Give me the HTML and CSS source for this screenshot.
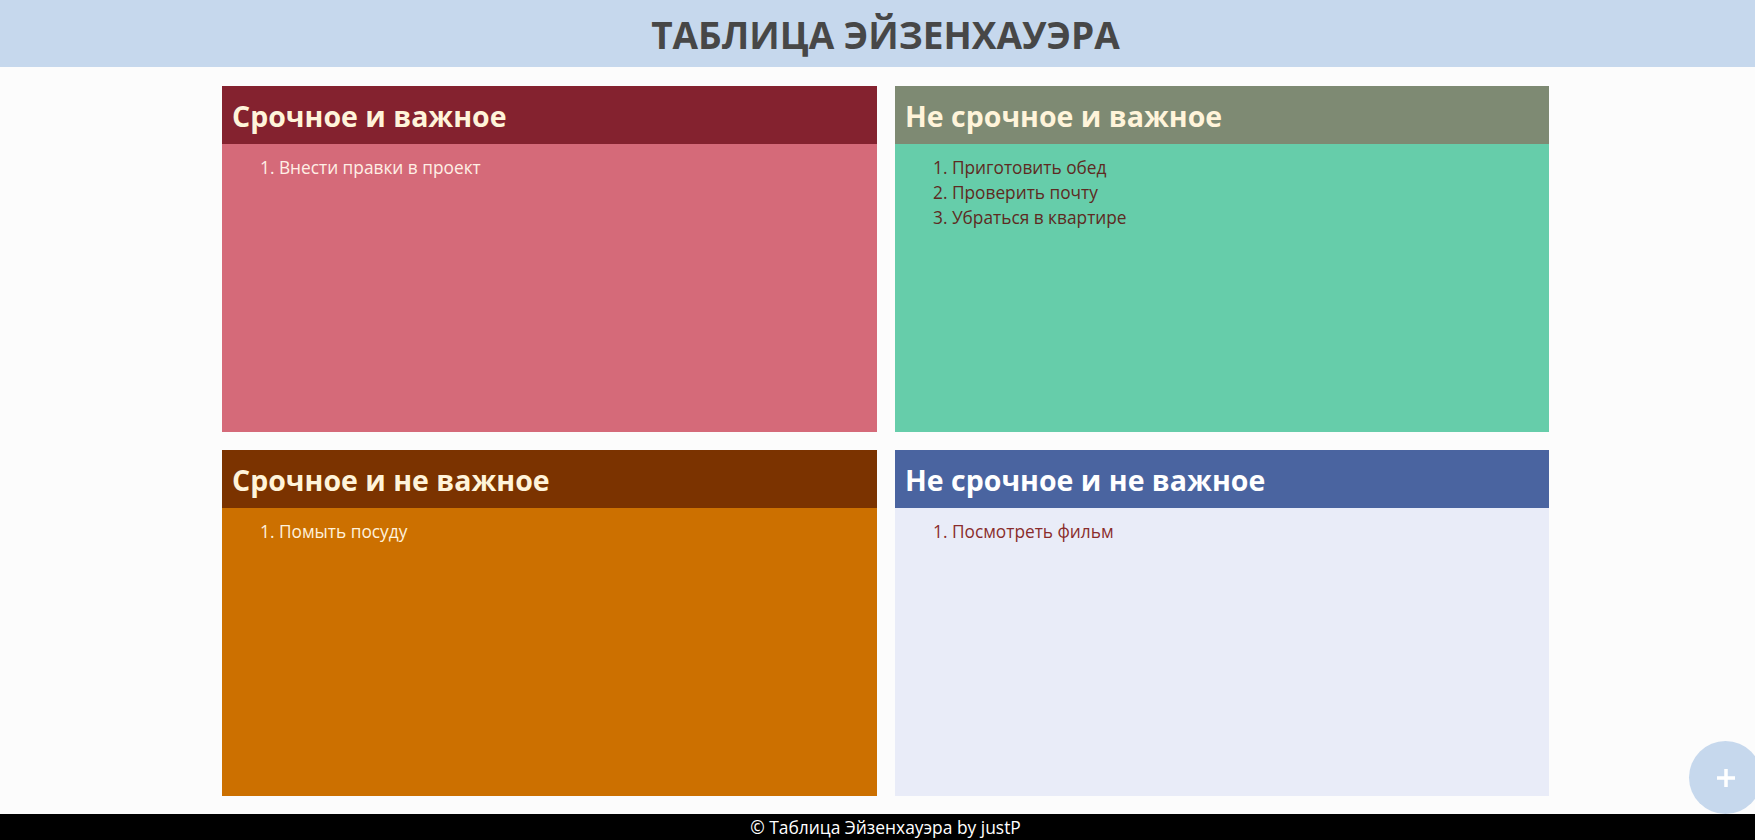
FILE: index.html
```html
<!DOCTYPE html>
<html lang="ru">
<head>
<meta charset="utf-8">
<title>Таблица Эйзенхауэра</title>
<link rel="stylesheet" href="styles.css">
</head>
<body>
<header class="top">
  <h1 class="title">ТАБЛИЦА ЭЙЗЕНХАУЭРА</h1>
</header>
<main class="matrix">
  <section class="card card-ui">
    <h2 class="card-head">Срочное и важное</h2>
    <ol class="card-list">
      <li>Внести правки в проект</li>
    </ol>
  </section>
  <section class="card card-ni">
    <h2 class="card-head">Не срочное и важное</h2>
    <ol class="card-list">
      <li>Приготовить обед</li>
      <li>Проверить почту</li>
      <li>Убраться в квартире</li>
    </ol>
  </section>
  <section class="card card-un">
    <h2 class="card-head">Срочное и не важное</h2>
    <ol class="card-list">
      <li>Помыть посуду</li>
    </ol>
  </section>
  <section class="card card-nn">
    <h2 class="card-head">Не срочное и не важное</h2>
    <ol class="card-list">
      <li>Посмотреть фильм</li>
    </ol>
  </section>
</main>
<button class="add-btn" type="button" aria-label="Добавить">
  <svg width="22" height="22" viewBox="0 0 22 22"><path d="M11 2v18M2 11h18" stroke="#fff" stroke-width="3.5" stroke-linecap="butt"/></svg>
</button>
<footer class="foot">© Таблица Эйзенхауэра by justP</footer>
</body>
</html>
```

FILE: styles.css
```css
* { box-sizing: border-box; }
html, body { margin: 0; padding: 0; }
body {
  background: #fcfcfc;
  font-family: "Open Sans", "Noto Sans", sans-serif;
  height: 840px;
  display: flex;
  flex-direction: column;
  overflow: hidden;
}
.top {
  height: 67px;
  background: #c6d8ed;
  display: flex;
  align-items: center;
  justify-content: center;
  padding-left: 16px;
}
.title {
  margin: 0;
  font-size: 37px;
  font-weight: 700;
  color: #474747;
  line-height: 1;
  padding-top: 2px;
}
.matrix {
  display: grid;
  grid-template-columns: 655px 654px;
  grid-template-rows: 346px 346px;
  column-gap: 18px;
  row-gap: 18px;
  margin: 19px 0 0 222px;
}
.card {
  display: flex;
  flex-direction: column;
}
.card-head {
  margin: 0;
  height: 58px;
  display: flex;
  align-items: center;
  padding: 2px 0 0 10px;
  font-size: 28.5px;
  font-weight: 700;
  color: #fff4da;
}
.card-list {
  margin: 0;
  padding: 11px 0 0 38px;
  list-style-position: inside;
  font-size: 17.3px;
  line-height: 25px;
  flex: 1;
}
.card-ui .card-head { background: #84222f; }
.card-ui .card-list { background: #d56a79; color: #fff0e6; }
.card-ni .card-head { background: #7e8a73; }
.card-ni .card-list { background: #66cdaa; color: #5e2a22; }
.card-un .card-head { background: #7b3300; }
.card-un .card-list { background: #cc7000; color: #fff2dc; }
.card-nn .card-head { background: #4a64a0; color: #ffffff; }
.card-nn .card-list { background: #e9ecf8; color: #8a2c2c; }
.add-btn {
  position: absolute;
  left: 1689px;
  top: 741px;
  width: 73px;
  height: 73px;
  border-radius: 50%;
  border: none;
  background: #c6d8ed;
  display: flex;
  align-items: center;
  justify-content: center;
  padding: 0;
}
.foot {
  margin-top: auto;
  height: 26px;
  background: #000;
  color: #fff;
  text-align: center;
  font-size: 17.4px;
  line-height: 26px;
  padding-left: 16px;
}
```
